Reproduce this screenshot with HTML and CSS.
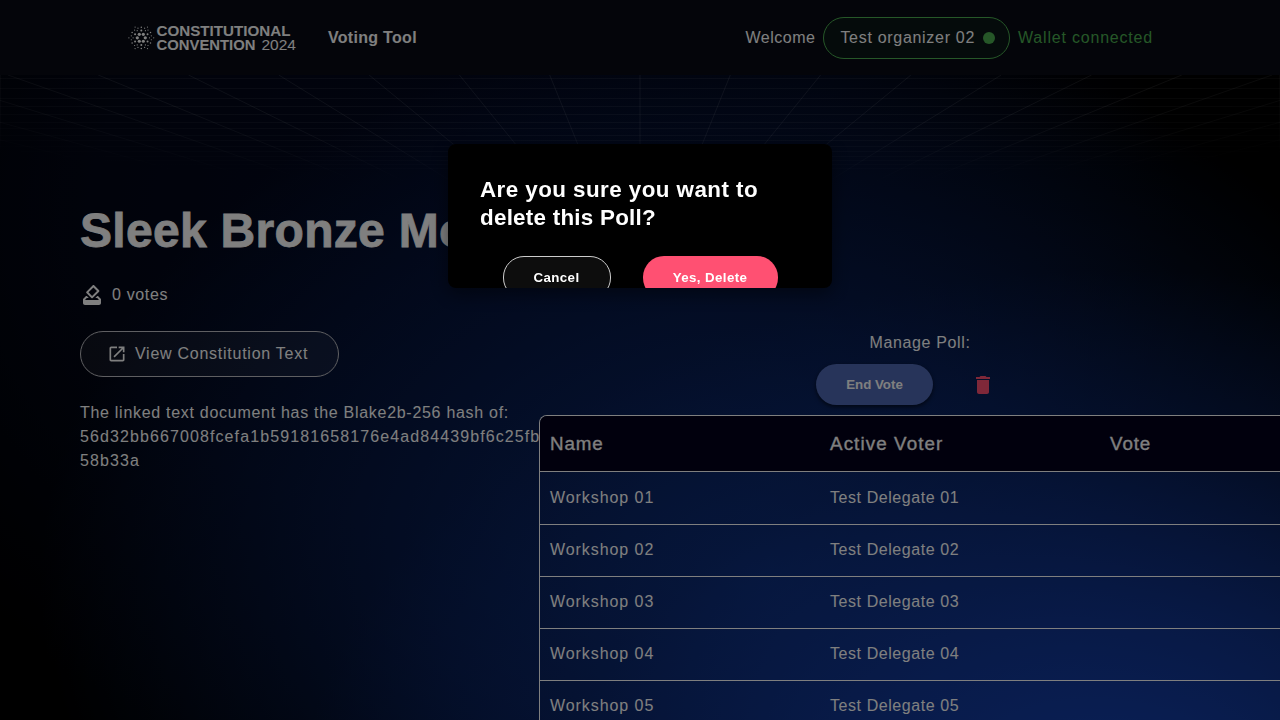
FILE: index.html
```html
<!DOCTYPE html>
<html lang="en">
<head>
<meta charset="utf-8">
<title>Constitutional Convention 2024 Voting Tool</title>
<link rel="stylesheet" href="styles.css">
</head>
<body>
<div class="page">
  <svg class="grid" width="1280" height="190" viewBox="0 0 1280 190" aria-hidden="true">
    <defs>
      <radialGradient id="fade" gradientUnits="userSpaceOnUse" cx="640" cy="60" r="1" gradientTransform="translate(640 60) scale(960 128) translate(-640 -60)">
        <stop offset="0" stop-color="#fff"/><stop offset=".6" stop-color="#fff" stop-opacity=".9"/><stop offset="1" stop-color="#fff" stop-opacity="0"/>
      </radialGradient>
      <mask id="fadeMask" maskUnits="userSpaceOnUse" x="0" y="0" width="1280" height="190"><rect width="1280" height="190" fill="url(#fade)"/></mask>
    </defs>
    <g id="gridLines" mask="url(#fadeMask)" fill="none" stroke="#fff"></g>
  </svg>
  <header class="header">
    <div class="brand">
      <svg class="logo" width="168" height="28" viewBox="0 0 168 28" role="img" aria-label="Constitutional Convention 2024">
        <g id="logoDots" fill="#fff"></g>
        <text class="logo-bold" x="28.5" y="12.4" textLength="134" lengthAdjust="spacingAndGlyphs">CONSTITUTIONAL</text>
        <text class="logo-bold" x="28.5" y="26.4" textLength="99" lengthAdjust="spacingAndGlyphs">CONVENTION</text>
        <text class="logo-light" x="133.5" y="26.4" textLength="34.5" lengthAdjust="spacingAndGlyphs">2024</text>
      </svg>
      <span class="tool-name">Voting Tool</span>
    </div>
    <div class="user">
      <span class="welcome">Welcome</span>
      <span class="user-chip"><span class="user-name">Test organizer 02</span><i class="dot"></i></span>
      <span class="wallet">Wallet connected</span>
    </div>
  </header>
  <main class="main">
    <section class="info">
      <h1 class="title">Sleek Bronze Mo</h1>
      <div class="votes">
        <svg width="24" height="24" viewBox="0 0 24 24" fill="currentColor"><path d="M18 13h-.68l-2 2h1.91L19 17H5l1.78-2h2.05l-2-2H6l-3 3v4c0 1.1.89 2 1.99 2H19c1.1 0 2-.89 2-2v-4l-3-3zm-1-5.05-4.95 4.95-3.54-3.54 4.95-4.95L17 7.95zm-4.24-5.66L6.39 8.66c-.39.39-.39 1.02 0 1.41l4.95 4.95c.39.39 1.02.39 1.41 0l6.36-6.36c.39-.39.39-1.02 0-1.41L14.16 2.3c-.38-.4-1.01-.4-1.4-.01z"/></svg>
        <span>0 votes</span>
      </div>
      <a class="view-text">
        <svg width="20" height="20" viewBox="0 0 24 24" fill="currentColor"><path d="M19 19H5V5h7V3H5c-1.11 0-2 .9-2 2v14c0 1.1.89 2 2 2h14c1.1 0 2-.9 2-2v-7h-2v7zM14 3v2h3.59l-9.83 9.83 1.41 1.41L19 6.41V10h2V3h-7z"/></svg>
        <span>View Constitution Text</span>
      </a>
      <p class="hash-label">The linked text document has the Blake2b-256 hash of:</p>
      <p class="hash">56d32bb667008fcefa1b59181658176e4ad84439bf6c25fb<br>58b33a</p>
    </section>
    <section class="manage">
      <div class="manage-label">Manage Poll:</div>
      <div class="manage-actions">
        <button class="btn btn-end">End Vote</button>
        <svg class="trash" width="24" height="24" viewBox="0 0 24 24" fill="currentColor"><path d="M6 19c0 1.1.9 2 2 2h8c1.1 0 2-.9 2-2V7H6v12zM19 4h-3.5l-1-1h-5l-1 1H5v2h14V4z"/></svg>
      </div>
      <div class="table">
        <div class="row head"><span>Name</span><span class="active-voter">Active Voter</span><span>Vote</span></div>
        <div class="row"><span>Workshop 01</span><span class="delegate">Test Delegate 01</span></div>
        <div class="row"><span>Workshop 02</span><span class="delegate">Test Delegate 02</span></div>
        <div class="row"><span>Workshop 03</span><span class="delegate">Test Delegate 03</span></div>
        <div class="row"><span>Workshop 04</span><span class="delegate">Test Delegate 04</span></div>
        <div class="row"><span>Workshop 05</span><span class="delegate">Test Delegate 05</span></div>
      </div>
    </section>
  </main>
</div>
<div class="backdrop">
  <div class="dialog" role="dialog">
    <h2 class="dialog-title">Are you sure you want to<br><span class="second-line">delete this Poll?</span></h2>
    <div class="dialog-actions">
      <button class="btn btn-cancel">Cancel</button>
      <button class="btn btn-delete">Yes, Delete</button>
    </div>
  </div>
</div>
<script src="script.js"></script>
</body>
</html>
```
FILE: styles.css
```css
* { box-sizing: border-box; }
body {
  margin: 0;
  height: 720px;
  overflow: hidden;
  background: #000;
  color: #fff;
  font: 16px/24px "Liberation Sans", Arial, sans-serif;
}
h1, h2, p { margin: 0; }
button { font: inherit; color: inherit; border: 0; }
.page {
  position: relative;
  height: 720px;
  overflow: hidden;
  background:
    radial-gradient(ellipse 820px 540px at 1120px 810px, rgba(22, 68, 184, .98) 0%, rgba(19, 60, 164, .78) 35%, rgba(14, 48, 134, .38) 68%, rgba(12, 40, 120, 0) 100%),
    radial-gradient(ellipse 720px 560px at 760px 580px, rgba(12, 44, 114, .95) 0%, rgba(9, 34, 94, .75) 45%, rgba(4, 12, 36, 0) 100%),
    radial-gradient(ellipse 700px 560px at 480px 220px, rgba(3, 10, 38, .85) 0%, rgba(3, 9, 32, .7) 55%, rgba(0, 0, 0, 0) 100%),
    #000;
}
.grid { position: absolute; left: 0; top: 0; }
.header {
  position: relative;
  height: 75px;
  padding: 0 127px 0 128px;
  display: flex;
  align-items: center;
  justify-content: space-between;
  background: #080b14;
}
.brand { display: flex; align-items: center; gap: 32px; }
.logo { overflow: visible; }
.logo-bold { font-size: 14.9px; font-weight: bold; fill: #fff; }
.logo-light { font-size: 14.9px; fill: #fff; }
.tool-name { font-weight: bold; letter-spacing: .3px; }
.user { display: flex; align-items: center; gap: 8px; }
.welcome { letter-spacing: .5px; }
.user-name { letter-spacing: .7px; }
.wallet { letter-spacing: .8px; color: #4caf50; }
.user-chip {
  display: flex;
  align-items: center;
  gap: 8px;
  height: 42px;
  padding: 0 14px 0 16px;
  border: 1px solid #4caf50;
  border-radius: 21px;
  background: #0a1617;
}
.dot { width: 12px; height: 12px; border-radius: 50%; background: #4caf50; }
.main { position: relative; display: flex; padding-left: 80px; }
.info { width: 459px; flex: none; padding-top: 127px; white-space: nowrap; }
.title { font-size: 48px; line-height: 58px; font-weight: bold; letter-spacing: .3px; -webkit-text-stroke: .8px #fff; }
.votes { display: flex; align-items: center; gap: 8px; margin-top: 23px; letter-spacing: .65px; }
.view-text {
  display: flex;
  align-items: center;
  gap: 8px;
  width: 259px;
  height: 46px;
  margin-top: 24px;
  padding-left: 26px;
  border: 1px solid #bfbfc4;
  border-radius: 23px;
  background: rgba(255, 255, 255, .06);
  letter-spacing: .74px;
}
.hash-label { margin-top: 24px; letter-spacing: .71px; }
.hash { letter-spacing: 1.1px; }
.manage { width: 762px; flex: none; padding-top: 256px; display: flex; flex-direction: column; align-items: center; }
.manage-label { letter-spacing: .63px; }
.manage-actions { display: flex; align-items: center; justify-content: space-between; width: 208px; padding-right: 29px; margin-top: 9px; }
.trash { color: #ff5072; }
.btn { font-size: 13.3px; line-height: 16px; font-weight: bold; border-radius: 21px; padding: 0; flex: none; }
.btn-end { width: 117px; height: 41px; background: #4e68b4; box-shadow: 0 2px 4px rgba(0, 0, 0, .6); letter-spacing: 0; }
.table {
  align-self: stretch;
  margin-top: 10px;
  border: 1px solid #fff;
  border-bottom: 0;
  border-radius: 8px 8px 0 0;
  overflow: hidden;
}
.row { display: grid; grid-template-columns: repeat(3, 280px); height: 52px; align-items: center; border-bottom: 1px solid #fff; letter-spacing: .93px; }
.row { padding-bottom: 1px; }
.row span { padding-left: 10px; }
.row .delegate { letter-spacing: .57px; }
.row.head { height: 56px; padding: 0; background: #02001a; font-size: 18.8px; letter-spacing: .9px; -webkit-text-stroke: .3px #fff; }
.row .active-voter { letter-spacing: 1.1px; }
.head + .row { height: 53px; padding: 0; }
.backdrop { position: fixed; inset: 0; background: rgba(0, 0, 0, .5); display: flex; align-items: flex-start; justify-content: center; padding-top: 144px; }
.dialog { width: 384px; height: 144px; padding: 32px 32px 0; border-radius: 8px; background: #000; overflow: hidden; box-shadow: 0 6px 18px rgba(0, 0, 0, .45); }
.dialog-title { font-size: 22.4px; line-height: 28px; font-weight: bold; letter-spacing: .44px; white-space: nowrap; }
.second-line { letter-spacing: .25px; }
.dialog-actions { display: flex; justify-content: center; gap: 32px; margin-top: 24px; }
.btn-cancel { width: 108px; height: 43px; border: 1px solid #ccc; background: #0d0d0d; letter-spacing: .4px; }
.btn-delete { width: 135px; height: 43px; background: #ff5072; letter-spacing: .4px; }
```
FILE: script.js
```js
const NS = "http://www.w3.org/2000/svg";

// Perspective floor: horizontals plus rays running to a vanishing point.
function addLines(d, opacity) {
  const p = document.createElementNS(NS, "path");
  p.setAttribute("d", d);
  p.setAttribute("stroke-opacity", opacity);
  document.getElementById("gridLines").append(p);
}
const ys = [78.5, 88.5, 98.5, 106.5, 114.5, 122.5, 128.5, 135.5, 140.5, 146.5, 151.5, 156.5, 160.5, 164.5, 168.5];
addLines(ys.map(y => `M0 ${y}H1280`).join("") + "M.5 75V180M1279.5 75V180", .07);
let rays = "";
for (let k = -20; k <= 20; k++) rays += `M${640 + k * 90.3} 75L640 297.6`;
addLines(rays, .11);

// Logo mark: rings of dots, [radius, dot size, start angle].
const rings = [[4, 1.6, 0], [7.2, 1, 30], [8.2, .6, 0], [10.6, .75, 30], [10.2, .6, 11], [10.2, .6, 49], [12.4, .6, 0]];
for (const [r, size, start] of rings) {
  for (let a = start; a < 360 + start; a += 60) {
    const c = document.createElementNS(NS, "circle");
    c.setAttribute("cx", 13.3 + r * Math.cos(a * Math.PI / 180));
    c.setAttribute("cy", 13.8 + r * Math.sin(a * Math.PI / 180));
    c.setAttribute("r", size);
    document.getElementById("logoDots").append(c);
  }
}
```
